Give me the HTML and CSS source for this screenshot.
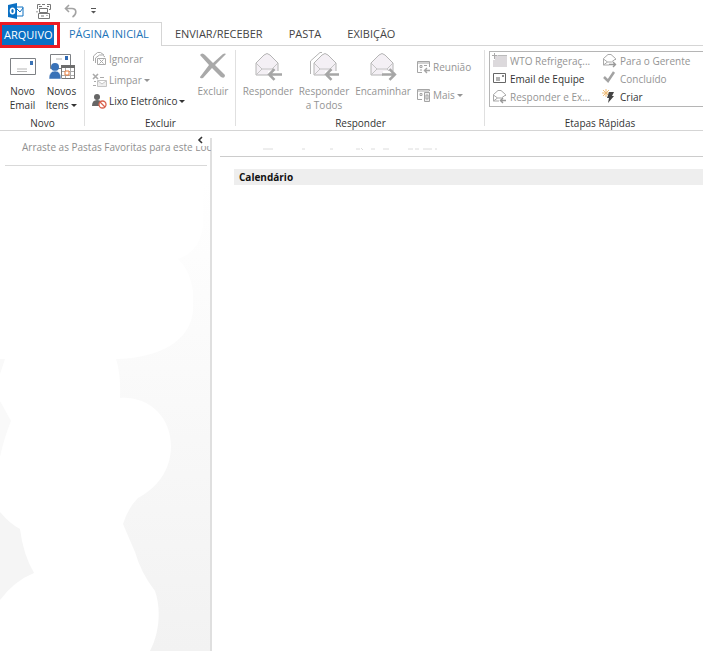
FILE: index.html
```html
<!DOCTYPE html>
<html lang="pt-BR">
<head>
<meta charset="utf-8">
<title>Outlook</title>
<link rel="stylesheet" href="styles.css">
</head>
<body>
<svg class="defs" aria-hidden="true">
  <symbol id="open-mail" viewBox="0 0 28 30">
    <path d="M2 12 10 4q3-3 6 0l8 8v12H2z" fill="#f4f0f5" stroke="#b4b4b4"/>
    <path d="M2 12l6 6h10l6-6M2 24l6-6M24 24l-6-6" fill="none" stroke="#c4c4c4"/>
  </symbol>
  <symbol id="arrow-left" viewBox="0 0 14 12"><path d="M14 6H3M7 1 2 6l5 5" fill="none" stroke="#a6a6a6" stroke-width="2.4"/></symbol>
  <symbol id="arrow-right" viewBox="0 0 14 12"><path d="M0 6h11M7 1l5 5-5 5" fill="none" stroke="#a6a6a6" stroke-width="2.4"/></symbol>
  <symbol id="small-mail" viewBox="0 0 16 16">
    <path d="M1.500 5.500 6 1.500h3l4.500 4V7M1.500 5.500V12H7M1.500 6l4 3h4l4-3M1.500 12l4-3" fill="none" stroke="#a9a9a9"/>
  </symbol>
</svg>

<header class="quick-access">
  <svg width="16" height="16" viewBox="0 0 16 16" aria-label="Outlook">
    <path d="M8 4h7v9H8z" fill="#fff" stroke="#1072c2"/><path d="M8 5l4 4 3-4" fill="none" stroke="#1072c2"/>
    <path d="M0 2 9 0v16L0 14z" fill="#0a70c4"/><ellipse cx="4.500" cy="8" rx="2" ry="2.800" fill="none" stroke="#fff" stroke-width="1.600"/>
  </svg>
  <button aria-label="Enviar/Receber Todas as Pastas">
    <svg width="16" height="16" viewBox="0 0 16 16" fill="none" stroke="#777"><path d="M1.500 6V1.500h3M6 1.500h3M11 1.500h3.500v5H13M1 9.500V8M3 3.500h3"/><path d="M3.500 5.500h8v4h-8zM2.500 10.500h11v5h-11zM5 13h3"/><path d="M11 3.500h2M10.500 12.500h1"/></svg>
  </button>
  <button aria-label="Desfazer">
    <svg width="14" height="14" viewBox="0 0 14 14" fill="none" stroke="#a3a3a3" stroke-width="1.600"><path d="M5 1 1.500 4.500 5 8M2 4.500h6c5 0 5 6 .5 8.500"/></svg>
  </button>
  <button aria-label="Personalizar Barra de Ferramentas">
    <svg width="7" height="6" viewBox="0 0 7 6"><path d="M1 0h5v1H1zM1 3h5L3.500 5.500z" fill="#555"/></svg>
  </button>
</header>

<nav class="tabs">
  <a class="tab file" href="#arquivo">ARQUIVO</a>
  <a class="tab active" href="#inicio">PÁGINA INICIAL</a>
  <a class="tab" href="#enviar">ENVIAR/RECEBER</a>
  <a class="tab" href="#pasta">PASTA</a>
  <a class="tab" href="#exibicao">EXIBIÇÃO</a>
</nav>

<section class="ribbon">
  <div class="group new">
    <div class="tools">
      <button class="big">
        <svg width="28" height="30" viewBox="0 0 28 30"><path d="M1.500 7.500h25v16h-25z" fill="#fff" stroke="#7d8084"/><path d="M21 10h3v4h-3z" fill="#3b73b5"/><path d="M8 18h10M8 20.500h10" stroke="#b5b5b5"/></svg>
        <span>Novo<br>Email</span>
      </button>
      <button class="big">
        <svg width="28" height="30" viewBox="0 0 28 30"><path d="M2.500 3.500h20v14h-20z" fill="#fff" stroke="#7d8084"/><path d="M17 5h3v4h-3z" fill="#2f69b3"/><path d="M8 8h6" stroke="#b5b5b5"/><path d="M13.500 14.500h13v13h-13z" fill="#fff" stroke="#777"/><path d="M13 14h14v3H13z" fill="#6d6d6d"/><path d="M17.500 17v10M22.500 17v10M14 20.500h12M14 24.500h12" stroke="#aaa"/><path d="M17 20h4v4h-4z" fill="#fff" stroke="#e67836"/><circle cx="7" cy="16" r="4" fill="#3972b8"/><path d="M1 28q0-8 6-8t6 8z" fill="#3972b8" stroke="#fff" stroke-width=".5"/></svg>
        <span>Novos<br>Itens <i class="caret"></i></span>
      </button>
    </div>
    <h2>Novo</h2>
  </div>

  <div class="group delete">
    <div class="tools">
      <div class="stack">
        <button class="small" disabled>
          <svg width="15" height="16" viewBox="0 0 15 16" fill="none" stroke="#aaa"><path d="M1.500 10V5l4-3.500h3L12 4M3.500 12V7l4-3h3L13 6"/><path d="M5.500 7.500h8v6h-8zM7.500 8.500l4 4M11.500 8.500l-4 4"/></svg>
          Ignorar
        </button>
        <button class="small" disabled>
          <svg width="15" height="16" viewBox="0 0 15 16" fill="none" stroke="#aaa"><path d="M1 2l5 5M6 2 1 7" stroke-width="1.600"/><path d="M8 5.500h4M2 9.500h2M1 13.500h3"/><path d="M5.500 8.500h9v6h-9zM6 9l4 3 4-3" fill="#eee" stroke="#c4c4c4"/></svg>
          Limpar <i class="caret"></i>
        </button>
        <button class="small">
          <svg width="15" height="16" viewBox="0 0 15 16"><circle cx="5" cy="4" r="3" fill="#666"/><path d="M0 13q0-6 5-6 4 0 5 3v3z" fill="#666"/><circle cx="10.500" cy="11.500" r="3.500" fill="#fff" stroke="#d9614c" stroke-width="1.300"/><path d="M8 9l5 5" stroke="#d9614c" stroke-width="1.300"/></svg>
          Lixo Eletrônico <i class="caret"></i>
        </button>
      </div>
      <button class="big" disabled>
        <svg width="28" height="30" viewBox="0 0 28 30"><path d="M1 4q2-3 5 0l8 8 10-9q2-1 3 0L16 14l10 10q0 4-4 2l-9-9L4 27q-3 1-3-1l9-12z" fill="#a9a9a9"/></svg>
        <span>Excluir</span>
      </button>
    </div>
    <h2>Excluir</h2>
  </div>

  <div class="group respond">
    <div class="tools">
      <button class="big" disabled>
        <svg width="28" height="30" viewBox="0 0 28 30"><use href="#open-mail" width="28" height="30"/><path d="M14 20h14v8H14z" fill="#fff"/><use href="#arrow-left" x="13" y="17" width="15" height="13"/></svg>
        <span>Responder</span>
      </button>
      <button class="big" disabled>
        <svg width="30" height="30" viewBox="0 0 30 30"><path d="M1.500 23V10L11 1.500h2" fill="none" stroke="#b4b4b4"/><use href="#open-mail" x="3" width="28" height="30"/><path d="M16 20h14v8H16z" fill="#fff"/><use href="#arrow-left" x="15" y="17" width="15" height="13"/></svg>
        <span>Responder<br>a Todos</span>
      </button>
      <button class="big" disabled>
        <svg width="28" height="30" viewBox="0 0 28 30"><use href="#open-mail" width="28" height="30"/><path d="M14 20h14v8H14z" fill="#fff"/><use href="#arrow-right" x="13" y="17" width="15" height="13"/></svg>
        <span>Encaminhar</span>
      </button>
      <div class="stack loose">
        <button class="small" disabled>
          <svg width="15" height="16" viewBox="0 0 15 16" fill="none" stroke="#a5a5a5"><path d="M6 13.500H1.500v-11h12V8M2 4h11" /><path d="M4 6.500h2v2H4zM8 6.500h3M4 11h2"/><path d="M14 11.500H9M11 9l-2.500 2.500L11 14" stroke-width="1.400"/></svg>
          Reunião
        </button>
        <button class="small" disabled>
          <svg width="15" height="16" viewBox="0 0 15 16" fill="none" stroke="#a5a5a5"><path d="M6 12.500H1.500v-10h12V4M2 4h11M4 6.500h2v2H4z"/><path d="M8.500 5.500h5v9h-5zM10 8h2v4h-2z" fill="#eee"/></svg>
          Mais <i class="caret"></i>
        </button>
      </div>
    </div>
    <h2>Responder</h2>
  </div>

  <div class="group steps">
    <div class="gallery">
      <button class="small" disabled>
        <svg width="15" height="16" viewBox="0 0 15 16"><path d="M3 2h12v12H1V7h2z" fill="#dcd9dc"/><path d="M0 2.500h5M2.500 0v6" stroke="#aaa"/><path d="M6 2.500h9" stroke="#bbb"/></svg>
        WTO Refrigeraç...
      </button>
      <button class="small" disabled>
        <svg width="15" height="16" viewBox="0 0 15 16"><use href="#small-mail" width="16" height="16"/><path d="M7 11.500h6M11 9l2.500 2.500L11 14" fill="none" stroke="#999" stroke-width="1.400"/></svg>
        Para o Gerente
      </button>
      <button class="small">
        <svg width="15" height="16" viewBox="0 0 15 16" fill="none" stroke="#666"><path d="M1.500 2.500h12v9h-12zM4 7h4M4 9h4"/><path d="M10.500 4.500h1v1h-1z"/></svg>
        Email de Equipe
      </button>
      <button class="small" disabled>
        <svg width="15" height="16" viewBox="0 0 15 16"><path d="M2 6l4 4 6-9" fill="none" stroke="#a3a3a3" stroke-width="2.500"/></svg>
        Concluído
      </button>
      <button class="small" disabled>
        <svg width="15" height="16" viewBox="0 0 15 16"><use href="#small-mail" width="16" height="16"/><path d="M14 11.500H8M11 9l-2.500 2.500L11 14" fill="none" stroke="#999" stroke-width="1.400"/></svg>
        Responder e Ex...
      </button>
      <button class="small">
        <svg width="15" height="16" viewBox="0 0 15 16"><path d="M4 0v8M0 4h8M1 1l6 6M7 1 1 7" stroke="#f0bd78"/><path d="M7 3h5l-2 4h2l-6 7 1-5H5z" fill="#444"/></svg>
        Criar
      </button>
    </div>
    <h2>Etapas Rápidas</h2>
  </div>
</section>

<div class="workspace">
  <aside class="folders">
    <div class="favorites">
      <p>Arraste as Pastas Favoritas para este <span class="faded">Loc</span></p>
      <button class="collapse" aria-label="Minimizar painel"><svg width="6" height="8" viewBox="0 0 6 8"><path d="M5 1 2 4l3 3" fill="none" stroke="#333" stroke-width="1.600"/></svg></button>
    </div>
    <svg class="shade" viewBox="0 0 210 485" preserveAspectRatio="none" aria-hidden="true">
      <defs><linearGradient id="fade" x1="0" y1="0" x2="0" y2="1"><stop offset="0" stop-color="#fff"/><stop offset=".4" stop-color="#fafafa"/><stop offset="1" stop-color="#f2f2f2"/></linearGradient></defs>
      <path d="M210 15H203V60Q200 85 178 93 190 104 193 125V145C190 175 160 192 116 193Q121 208 120 232C150 230 171 252 171 280 171 306 155 323 138 332Q128 342 123 358L135 386Q141 407 155 425C161 442 160 466 150 485H210Z" fill="url(#fade)"/>
      <path d="M0 193h5L0 208ZM0 235l11 20Q4 272 0 291Z" fill="#f9f9f9"/>
      <path d="M0 346Q10 358 20 363 23 388 34 407 14 415 0 434Z" fill="#f5f5f5"/>
    </svg>
  </aside>
  <main class="today">
    <div class="masthead">
      <svg width="180" height="3" viewBox="0 0 180 3" aria-hidden="true"><path d="M1 1h10M40 1h3M68 1h3M94 1h4M99 0l2 2M109 1h4M121 1h6M146 1h5M153 1h4M161 1h9M173 1h2" stroke="#dcdcdc" fill="none"/></svg>
    </div>
    <h1>Calendário</h1>
  </main>
</div>
</body>
</html>
```
FILE: styles.css
```css
* { box-sizing: border-box; }
body {
  margin: 0;
  min-height: 100vh;
  display: flex;
  flex-direction: column;
  background: #fff;
  color: #333;
  font: 10px/14px "Open Sans", "Noto Sans", sans-serif;
  overflow-x: hidden;
}
button { margin: 0; padding: 0; border: 0; background: none; color: inherit; font: inherit; }
button:disabled { color: #949494; }
svg { display: block; flex: none; }
.defs { position: absolute; width: 0; height: 0; }
h1, h2, p { margin: 0; font: inherit; }

.quick-access { display: flex; align-items: center; gap: 12px; height: 22px; padding: 0 8px; }

.tabs { display: flex; height: 24px; border-bottom: 1px solid #d5d5d5; font-size: 11px; }
.tab { padding: 0 13px; color: #444; line-height: 24px; text-decoration: none; white-space: nowrap; }
.tab.file {
  height: 26px;
  width: 60px;
  padding: 0 2px;
  border: 3px solid #ed1c24;
  border-left-width: 2px;
  background: linear-gradient(to right, #0a70c4 52px, #fff 52px);
  color: #fff;
  line-height: 20px;
  z-index: 1;
}
.tab.active {
  height: 24px;
  padding: 0 12px 0 9px;
  border: 1px solid #d5d5d5;
  border-width: 1px 1px 0 0;
  background: #fff;
  color: #1b73b8;
  line-height: 22px;
}

.ribbon { display: flex; height: 85px; border-bottom: 1px solid #d5d5d5; }
.group { position: relative; display: flex; flex-direction: column; justify-content: space-between; flex: none; }
.group:not(:last-child)::after { content: ""; position: absolute; top: 4px; right: 0; bottom: 4px; border-right: 1px solid #e0e0e0; }
.group h2 { text-align: center; }
.tools { display: flex; align-items: flex-start; padding-top: 5px; }
.new { width: 85px; padding: 0 3px; }
.delete { width: 151px; padding: 0 7px; }
.respond { width: 249px; padding: 0 4px; }
.steps { flex: 1; min-width: 218px; padding-left: 4px; }
.steps h2 { padding-left: 8px; }
.big { display: flex; flex: none; flex-direction: column; align-items: center; gap: 3px; text-align: center; white-space: nowrap; }
.new .big { width: 39px; }
.delete .big { width: 44px; }
.respond .big { width: 56px; }
.respond .big:nth-child(3) { width: 62px; }
.caret { display: inline-block; border: 3px solid transparent; border-top-color: currentColor; border-bottom: 0; vertical-align: 2px; }
.stack { display: flex; flex: none; flex-direction: column; gap: 5px; width: 99px; }
.stack.loose { width: auto; gap: 12px; padding: 8px 0 0 2px; }
.small { display: flex; align-items: center; gap: 2px; height: 16px; white-space: nowrap; text-align: left; }
.gallery {
  display: grid;
  grid-template-columns: 110px 1fr;
  grid-auto-rows: 18px;
  align-items: center;
  margin-top: 5px;
  padding-left: 2px;
  border: 1px solid #b5b5b5;
  border-right: 0;
}
.gallery .small { gap: 3px; }

.workspace { display: flex; flex: 1; padding-top: 7px; }
.folders { display: flex; flex-direction: column; width: 212px; flex: none; border-right: 2px solid #dfdfdf; }
.favorites { position: relative; height: 28px; margin: 0 3px 0 5px; padding: 2px 0 0 17px; border-bottom: 1px solid #d9d9d9; color: #8f8f8f; }
.favorites p { white-space: nowrap; }
.faded { display: inline-block; clip-path: inset(6px 0 0 0); }
.collapse { position: absolute; top: -2px; right: 4px; }
.shade { flex: 1; width: 100%; min-height: 0; }
.today { flex: 1; min-width: 0; padding-left: 8px; }
.masthead { height: 19px; padding: 10px 0 0 42px; border-bottom: 1px solid #ccc; }
.today h1 { margin: 12px 0 0 14px; padding-left: 5px; background: #eee; color: #111; font-weight: 700; line-height: 16px; }
```
